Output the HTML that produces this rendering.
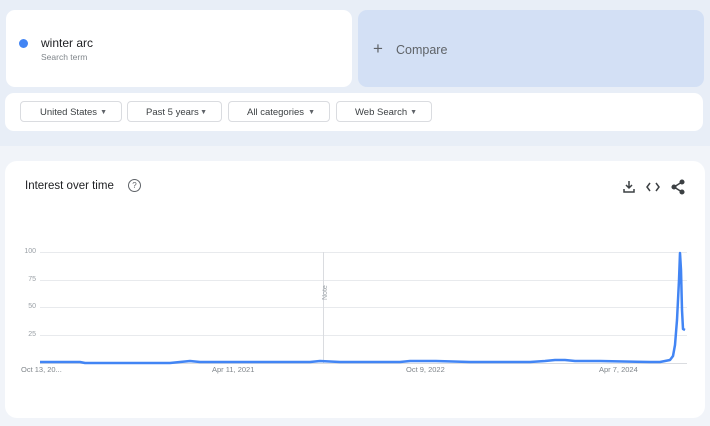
<!DOCTYPE html>
<html><head><style>
body{margin:0;width:710px;height:426px;overflow:hidden;font-family:"Liberation Sans",sans-serif;background:#f1f4f9;position:relative}
.top{position:absolute;left:0;top:0;width:710px;height:146px;background:#e8eef7}
.card{position:absolute;background:#fff;border-radius:9px}
.chip{position:absolute;top:101px;height:21px;border:1px solid #dadce0;border-radius:4px;background:#fff;font-size:9.5px;color:#3c4043;line-height:21px;box-sizing:border-box}
.chip span{position:absolute;right:14px;top:0;font-size:7px;color:#5f6368}
.yl{position:absolute;left:18px;font-size:7px;color:#9aa0a6;width:18px;text-align:right}
.xl{position:absolute;top:365px;font-size:7.5px;color:#80868b}
.gl{position:absolute;left:40px;width:647px;height:1px;background:#e8eaed}
</style></head><body>
<div class="top"></div>
<div class="card" style="left:6px;top:10px;width:346px;height:77px"></div>
<div style="position:absolute;left:19px;top:39px;width:9px;height:9px;border-radius:50%;background:#4285f4"></div>
<div style="position:absolute;left:41px;top:36px;font-size:12px;color:#202124">winter arc</div>
<div style="position:absolute;left:41px;top:52px;font-size:8.5px;color:#80868b">Search term</div>
<div class="card" style="left:358px;top:10px;width:346px;height:77px;background:#d3e0f5"></div>
<div style="position:absolute;left:373px;top:40px;font-size:17px;color:#5f6368;line-height:18px">+</div>
<div style="position:absolute;left:396px;top:43px;font-size:12.5px;color:#5f6368">Compare</div>
<div class="card" style="left:5px;top:93px;width:698px;height:38px"></div>
<div class="chip" style="left:20px;width:102px;padding-left:19px">United States<span>▼</span></div>
<div class="chip" style="left:127px;width:95px;padding-left:18px">Past 5 years<span>▼</span></div>
<div class="chip" style="left:228px;width:102px;padding-left:18px">All categories<span>▼</span></div>
<div class="chip" style="left:336px;width:96px;padding-left:18px">Web Search<span>▼</span></div>
<div class="card" style="left:5px;top:161px;width:700px;height:257px;border-radius:12px"></div>
<div style="position:absolute;left:25px;top:180px;font-size:11.5px;color:#202124">Interest over time</div>
<div style="position:absolute;left:128px;top:179px;width:11px;height:11px;border:1.3px solid #5f6368;border-radius:50%;font-size:8px;color:#5f6368;text-align:center;line-height:11px">?</div>
<svg style="position:absolute;left:620px;top:178px" width="70" height="18" viewBox="0 0 70 18" fill="none" stroke="#3c4043" stroke-width="1.5">
<path d="M9 3v7M6 7l3 3 3-3M4 11v3h10v-3"/>
<path d="M30 5l-3 4 3 4M36 5l3 4-3 4"/>
<circle cx="62" cy="4" r="1.8" fill="#3c4043"/><circle cx="54" cy="9" r="1.8" fill="#3c4043"/><circle cx="62" cy="14" r="1.8" fill="#3c4043"/><path d="M62 4l-8 5 8 5"/>
</svg>
<div class="gl" style="top:252px"></div><div class="gl" style="top:280px"></div><div class="gl" style="top:307px"></div><div class="gl" style="top:335px"></div><div class="gl" style="top:363px;background:#dadce0"></div>
<div class="yl" style="top:248px">100</div><div class="yl" style="top:276px">75</div><div class="yl" style="top:303px">50</div><div class="yl" style="top:331px">25</div>
<div style="position:absolute;left:323px;top:252px;width:1px;height:111px;background:#dadce0"></div>
<div style="position:absolute;left:322px;top:300px;font-size:7px;color:#9aa0a6;transform:rotate(-90deg);transform-origin:left top">Note</div>
<div class="xl" style="left:21px">Oct 13, 20...</div><div class="xl" style="left:212px">Apr 11, 2021</div><div class="xl" style="left:406px">Oct 9, 2022</div><div class="xl" style="left:599px">Apr 7, 2024</div>
<svg style="position:absolute;left:0;top:0" width="710" height="426" fill="none">
<polyline stroke="#4285f4" stroke-width="2.5" stroke-linejoin="round" points="40,362 80,362 85,363 170,363 180,362 190,361 200,362 300,362 310,362 320,361 340,362 400,362 410,361 436,361 470,362 530,362 545,361 555,360 565,360 575,361 600,361 650,362 660,362 665,361 670,360 673,356 675,345 677,320 679,280 680,253 681,270 682,310 683,329 685,330"/>
</svg>
</body></html>
